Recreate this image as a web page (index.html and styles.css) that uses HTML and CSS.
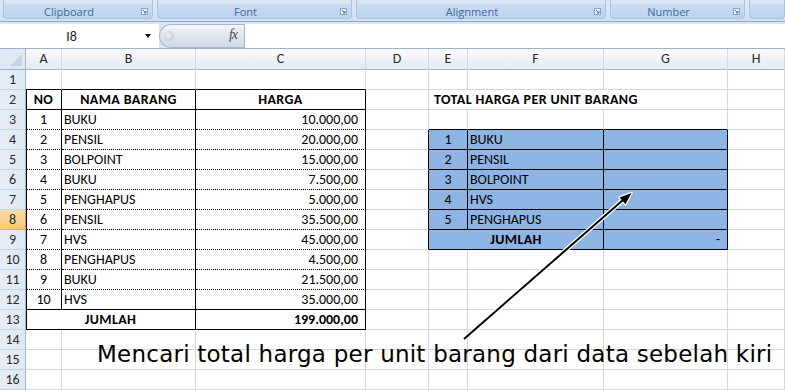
FILE: index.html
```html
<!DOCTYPE html>
<html>
<head>
<meta charset="utf-8">
<link rel="stylesheet" href="styles.css">
</head>
<body>
<div class="app">
  <div class="ribbon">
    <div class="grp g1"><span class="glabel">Clipboard</span><span class="launch"><svg width="7" height="7" viewBox="0 0 7 7"><rect x="0.5" y="0.5" width="6" height="6" fill="#eef3fa" stroke="#8aa3c6"/><path d="M2 2 L5 5 M5 3 V5 H3" stroke="#4d6e9c" fill="none"/></svg></span></div>
    <div class="grp g2"><span class="glabel">Font</span><span class="launch"><svg width="7" height="7" viewBox="0 0 7 7"><rect x="0.5" y="0.5" width="6" height="6" fill="#eef3fa" stroke="#8aa3c6"/><path d="M2 2 L5 5 M5 3 V5 H3" stroke="#4d6e9c" fill="none"/></svg></span></div>
    <div class="grp g3"><span class="glabel">Alignment</span><span class="launch"><svg width="7" height="7" viewBox="0 0 7 7"><rect x="0.5" y="0.5" width="6" height="6" fill="#eef3fa" stroke="#8aa3c6"/><path d="M2 2 L5 5 M5 3 V5 H3" stroke="#4d6e9c" fill="none"/></svg></span></div>
    <div class="grp g4"><span class="glabel">Number</span><span class="launch"><svg width="7" height="7" viewBox="0 0 7 7"><rect x="0.5" y="0.5" width="6" height="6" fill="#eef3fa" stroke="#8aa3c6"/><path d="M2 2 L5 5 M5 3 V5 H3" stroke="#4d6e9c" fill="none"/></svg></span></div>
    <div class="grp g5"></div>
  </div>
  <div class="fbar">
    <div class="namebox"><span class="nb-text">I8</span><span class="nb-arrow"></span></div>
    <div class="capsule"><span class="dot"></span><span class="fx">fx</span></div>
    <div class="finput"></div>
  </div>
  <div class="sheet">
    <div class="corner"><span class="tri"></span></div>
    <div class="ch">A</div><div class="ch">B</div><div class="ch">C</div><div class="ch">D</div><div class="ch">E</div><div class="ch">F</div><div class="ch">G</div><div class="ch">H</div>

    <div class="rh">1</div><div class="c bb"></div><div class="c bb"></div><div class="c bb"></div><div class="c"></div><div class="c"></div><div class="c"></div><div class="c"></div><div class="c"></div>

    <div class="rh">2</div><div class="c bl br bb b ctr">NO</div><div class="c br bb b ctr">NAMA BARANG</div><div class="c br bb b ctr">HARGA</div><div class="c"></div><div class="c span3 b">TOTAL HARGA PER UNIT BARANG</div><div class="c"></div>

    <div class="rh">3</div><div class="c bl br bd ctr">1</div><div class="c br bd">BUKU</div><div class="c br bd rt">10.000,00</div><div class="c"></div><div class="c bb"></div><div class="c bb"></div><div class="c bb"></div><div class="c"></div>

    <div class="rh">4</div><div class="c bl br bd ctr">2</div><div class="c br bd">PENSIL</div><div class="c br bd rt">20.000,00</div><div class="c br"></div><div class="c blue br bb ctr">1</div><div class="c blue br bb">BUKU</div><div class="c blue br bb"></div><div class="c"></div>

    <div class="rh">5</div><div class="c bl br bd ctr">3</div><div class="c br bd">BOLPOINT</div><div class="c br bd rt">15.000,00</div><div class="c br"></div><div class="c blue br bb ctr">2</div><div class="c blue br bb">PENSIL</div><div class="c blue br bb"></div><div class="c"></div>

    <div class="rh">6</div><div class="c bl br bd ctr">4</div><div class="c br bd">BUKU</div><div class="c br bd rt">7.500,00</div><div class="c br"></div><div class="c blue br bb ctr">3</div><div class="c blue br bb">BOLPOINT</div><div class="c blue br bb"></div><div class="c"></div>

    <div class="rh">7</div><div class="c bl br bd ctr">5</div><div class="c br bd">PENGHAPUS</div><div class="c br bd rt">5.000,00</div><div class="c br"></div><div class="c blue br bb ctr">4</div><div class="c blue br bb">HVS</div><div class="c blue br bb"></div><div class="c"></div>

    <div class="rh sel">8</div><div class="c bl br bd ctr">6</div><div class="c br bd">PENSIL</div><div class="c br bd rt">35.500,00</div><div class="c br"></div><div class="c blue br bb ctr">5</div><div class="c blue br bb">PENGHAPUS</div><div class="c blue br bb"></div><div class="c"></div>

    <div class="rh">9</div><div class="c bl br bd ctr">7</div><div class="c br bd">HVS</div><div class="c br bd rt">45.000,00</div><div class="c br"></div><div class="c blue br bb b ctr span2">JUMLAH</div><div class="c blue br bb rt">-</div><div class="c"></div>

    <div class="rh">10</div><div class="c bl br bd ctr">8</div><div class="c br bd">PENGHAPUS</div><div class="c br bd rt">4.500,00</div><div class="c"></div><div class="c"></div><div class="c"></div><div class="c"></div><div class="c"></div>

    <div class="rh">11</div><div class="c bl br bd ctr">9</div><div class="c br bd">BUKU</div><div class="c br bd rt">21.500,00</div><div class="c"></div><div class="c"></div><div class="c"></div><div class="c"></div><div class="c"></div>

    <div class="rh">12</div><div class="c bl br bb ctr">10</div><div class="c br bb">HVS</div><div class="c br bb rt">35.000,00</div><div class="c"></div><div class="c"></div><div class="c"></div><div class="c"></div><div class="c"></div>

    <div class="rh">13</div><div class="c bl br bb b ctr span2">JUMLAH</div><div class="c br bb b rt">199.000,00</div><div class="c"></div><div class="c"></div><div class="c"></div><div class="c"></div><div class="c"></div>

    <div class="rh">14</div><div class="c"></div><div class="c"></div><div class="c"></div><div class="c"></div><div class="c"></div><div class="c"></div><div class="c"></div><div class="c"></div>

    <div class="rh">15</div><div class="c"></div><div class="c"></div><div class="c"></div><div class="c"></div><div class="c"></div><div class="c"></div><div class="c"></div><div class="c"></div>

    <div class="rh">16</div><div class="c"></div><div class="c"></div><div class="c"></div><div class="c"></div><div class="c"></div><div class="c"></div><div class="c"></div><div class="c"></div>

    <div class="note">Mencari total harga per unit barang dari data sebelah kiri</div>
  </div>
  <svg class="arrow" width="785" height="390" viewBox="0 0 785 390">
    <line x1="464" y1="339" x2="623" y2="200" stroke="#fff" stroke-width="4.5"/>
    <polygon points="631.5,193 625.5,204.3 619.5,197.5" fill="#fff" stroke="#fff" stroke-width="2.5" stroke-linejoin="round"/>
    <line x1="464" y1="339" x2="623" y2="200" stroke="#000" stroke-width="2"/>
    <polygon points="631.5,193 625.5,204.3 619.5,197.5" fill="#000"/>
  </svg>
</div>
</body>
</html>
```

FILE: styles.css
```css
* { box-sizing: border-box; }
html, body { margin: 0; padding: 0; background: #fff; }
body { width: 785px; height: 390px; overflow: hidden; }
.app { position: relative; width: 785px; height: 390px; overflow: hidden; }

.ribbon {
  height: 22px;
  display: flex;
  gap: 4px;
  padding-left: 3px;
  background: linear-gradient(#dce8f6, #d0e0f3);
  border-bottom: 1px solid #91abd0;
}
.grp {
  position: relative;
  height: 19px;
  border: 1px solid #a9c2e2;
  border-top: none;
  border-radius: 0 0 4px 4px;
  background: linear-gradient(#dbe7f5 0, #dbe7f5 3px, #c9dcf2 4px, #bcd3ee 100%);
  display: flex;
  align-items: center;
  justify-content: center;
  padding: 5px 18px 0 0;
  flex: none;
}
.g1 { width: 150px; }
.g2 { width: 195px; }
.g3 { width: 250px; }
.g4 { width: 135px; }
.g5 { flex: 1; }
.glabel {
  font-family: "Open Sans", "DejaVu Sans", sans-serif;
  font-size: 11px;
  color: #41689f;
  line-height: 14px;
}
.launch { position: absolute; right: 4px; top: 8px; width: 7px; height: 7px; display: block; line-height: 0; }

.fbar {
  height: 27px;
  padding-top: 2px;
  background: #dbe6f4;
  border-bottom: 1px solid #9fb3cb;
  display: flex;
}
.namebox {
  width: 159px;
  height: 24px;
  background: #fff;
  position: relative;
  display: flex;
  align-items: center;
  justify-content: center;
  padding-right: 14px;
}
.nb-text {
  font-family: "Carlito", "Lato", sans-serif;
  font-size: 14px;
  color: #222;
  margin-left: -2px;
}
.nb-arrow {
  position: absolute;
  left: 145px;
  top: 10px;
  width: 0; height: 0;
  border-left: 3.5px solid transparent;
  border-right: 3.5px solid transparent;
  border-top: 4px solid #111;
}
.capsule {
  width: 85px;
  height: 24px;
  border: 1px solid #a6b5c9;
  border-right: none;
  border-radius: 12px 0 0 12px;
  background: linear-gradient(#f4f6f9, #dfe5ee 50%, #cfd8e4);
  position: relative;
}
.dot {
  position: absolute;
  left: 4px; top: 6px;
  width: 10px; height: 10px;
  border-radius: 50%;
  background: radial-gradient(circle at 40% 40%, #f4f4f4, #b9bec6);
}
.fx {
  position: absolute;
  right: 7px; top: 2px;
  font-family: "Liberation Serif", serif;
  font-style: italic;
  font-size: 14px;
  color: #4a4a4a;
  letter-spacing: -1px;
}
.finput {
  flex: 1;
  height: 24px;
  background: #fff;
  border-left: 1px solid #a6b5c9;
}

.sheet {
  position: relative;
  display: grid;
  grid-template-columns: 26px 36px 134px 170px 63px 39px 136px 124px 57px;
  grid-template-rows: 21px;
  grid-auto-rows: 20px;
  font-family: "Carlito", "Lato", sans-serif;
  font-size: 14px;
  color: #000;
}
.corner {
  position: relative;
  background: #dfe8f5;
  border-right: 1px solid #9eb6ce;
  border-bottom: 1px solid #9eb6ce;
}
.tri {
  position: absolute;
  right: 3px; bottom: 3px;
  width: 12px; height: 12px;
  background: #c4d2e3;
  clip-path: polygon(100% 0, 100% 100%, 0 100%);
}
.ch {
  background: linear-gradient(#fafbfd, #e4eaf2);
  border-right: 1px solid #d2dbe7;
  border-bottom: 1px solid #9eb6ce;
  text-align: center;
  line-height: 20px;
  color: #2b2b2b;
}
.rh {
  background: linear-gradient(90deg, #e8eef8, #dfe7f3);
  border-right: 1px solid #9eb6ce;
  border-bottom: 1px solid #c5d3e6;
  text-align: center;
  line-height: 19px;
  color: #2b2b2b;
}
.rh.sel {
  background: linear-gradient(#fadba3, #f4c878);
  border-bottom-color: #f2b24f;
  border-right-color: #f29536;
}
.c {
  border-right: 1px solid #d0d7e5;
  border-bottom: 1px solid #d0d7e5;
  padding: 0 2px;
  white-space: nowrap;
  line-height: 20px;
  overflow: visible;
}
.b { font-weight: bold; letter-spacing: 0.4px; }
.ctr { text-align: center; }
.rt { text-align: right; padding-right: 7px; }
.rt.b { letter-spacing: 0; }
.bb { border-bottom: 1px solid #000; }
.bd { border-bottom: 1px dotted #000; }
.br { border-right-color: #000; }
.bl { box-shadow: inset 1px 0 0 #000; }
.blue { background: #8db4e2; }
.span2 { grid-column: span 2; }
.span3 { grid-column: span 3; padding-left: 5px; }

.note {
  position: absolute;
  left: 97px;
  top: 292px;
  font-family: "DejaVu Sans", sans-serif;
  font-size: 23px;
  letter-spacing: 0.23px;
  line-height: 26px;
  color: #000;
  white-space: nowrap;
}
.arrow { position: absolute; left: 0; top: 0; pointer-events: none; }
```
